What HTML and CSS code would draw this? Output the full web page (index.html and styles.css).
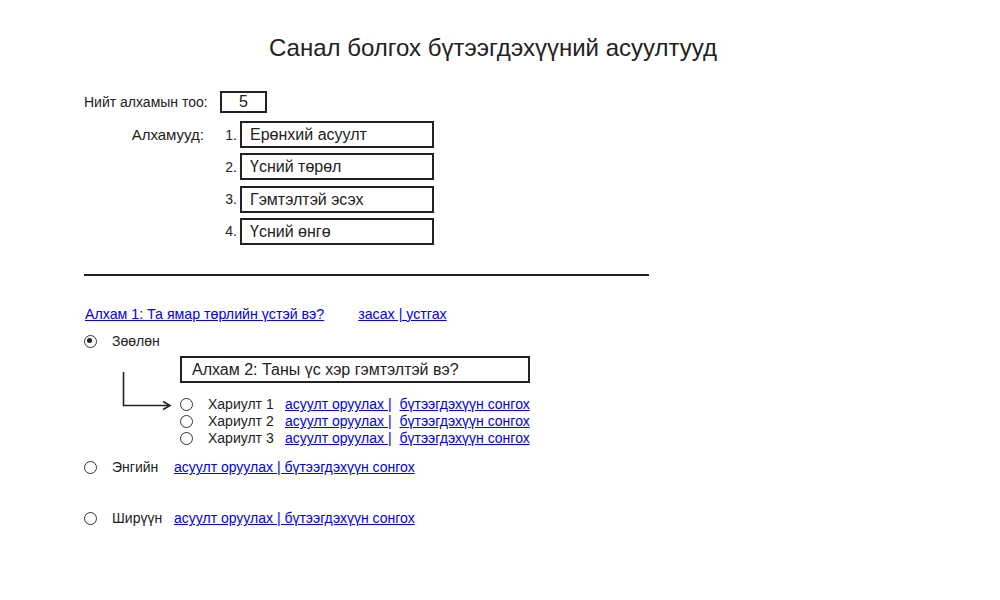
FILE: index.html
```html
<!DOCTYPE html>
<html lang="mn">
<head>
<meta charset="utf-8">
<title>Санал болгох бүтээгдэхүүний асуултууд</title>
<link rel="stylesheet" href="styles.css">
</head>
<body>
<div class="page">
  <h1 class="title">Санал болгох бүтээгдэхүүний асуултууд</h1>

  <div class="count-row">
    <span class="count-label">Нийт алхамын тоо:</span>
    <span class="count-box">5</span>
  </div>

  <div class="steps-row">
    <span class="steps-label">Алхамууд:</span>
    <ol class="steps">
      <li class="step"><span class="num">1.</span><span class="step-box">Ерөнхий асуулт</span></li>
      <li class="step"><span class="num">2.</span><span class="step-box">Үсний төрөл</span></li>
      <li class="step"><span class="num">3.</span><span class="step-box">Гэмтэлтэй эсэх</span></li>
      <li class="step"><span class="num">4.</span><span class="step-box">Үсний өнгө</span></li>
    </ol>
  </div>

  <hr class="divider">

  <div class="q-head">
    <a href="#" class="link">Алхам 1: Та ямар төрлийн үстэй вэ?</a>
    <a href="#" class="link edit">засах | устгах</a>
  </div>

  <div class="opt">
    <span class="radio checked"></span>
    <span class="opt-label">Зөөлөн</span>
  </div>

  <div class="nested">
    <svg class="arrow" width="58" height="56" viewBox="0 0 58 56">
      <path d="M3.5 16 V49.5 H48" fill="none" stroke="#222" stroke-width="1.6"/>
      <path d="M43 45.5 L50 49.5 L43 53.5" fill="none" stroke="#222" stroke-width="1.6"/>
    </svg>
    <div class="sub">
      <div class="sub-box">Алхам 2: Таны үс хэр гэмтэлтэй вэ?</div>
      <div class="answers">
        <div class="answer"><span class="radio"></span><span class="ans-label">Хариулт 1</span><a href="#" class="link">асуулт оруулах |</a><a href="#" class="link">бүтээгдэхүүн сонгох</a></div>
        <div class="answer"><span class="radio"></span><span class="ans-label">Хариулт 2</span><a href="#" class="link">асуулт оруулах |</a><a href="#" class="link">бүтээгдэхүүн сонгох</a></div>
        <div class="answer"><span class="radio"></span><span class="ans-label">Хариулт 3</span><a href="#" class="link">асуулт оруулах |</a><a href="#" class="link">бүтээгдэхүүн сонгох</a></div>
      </div>
    </div>
  </div>

  <div class="opt opt-plain">
    <span class="radio"></span>
    <span class="opt-label short">Энгийн</span>
    <a href="#" class="link">асуулт оруулах | бүтээгдэхүүн сонгох</a>
  </div>

  <div class="opt opt-hard">
    <span class="radio"></span>
    <span class="opt-label short">Ширүүн</span>
    <a href="#" class="link">асуулт оруулах | бүтээгдэхүүн сонгох</a>
  </div>
</div>
</body>
</html>
```

FILE: styles.css
```css
* { box-sizing: border-box; }

body {
  margin: 0;
  background: #fff;
  color: #222;
  font-family: "Liberation Sans", Arial, sans-serif;
  font-size: 14px;
}

.page {
  width: 1000px;
  height: 600px;
  padding: 34px 0 0 84px;
}

.title {
  margin: 0 0 0 -84px;
  padding-right: 14px;
  text-align: center;
  font-weight: normal;
  font-size: 24px;
  line-height: 28px;
  color: #222;
}

.count-row {
  display: flex;
  align-items: center;
  margin-top: 29px;
  height: 22px;
}

.count-label {
  width: 136px;
}

.count-box {
  width: 47px;
  height: 22px;
  border: 2px solid #222;
  text-align: center;
  font-size: 16px;
  line-height: 18px;
}

.steps-row {
  display: flex;
  margin-top: 8px;
}

.steps-label {
  width: 120px;
  text-align: right;
  line-height: 27px;
  font-size: 15px;
}

.steps {
  list-style: none;
  margin: 0;
  padding: 0;
  display: flex;
  flex-direction: column;
  gap: 5.3px;
}

.step {
  display: flex;
  align-items: center;
}

.num {
  width: 33px;
  text-align: right;
  margin-right: 3px;
}

.step-box {
  width: 194px;
  height: 27px;
  border: 2px solid #222;
  padding-left: 8px;
  font-size: 16px;
  line-height: 23px;
}

.divider {
  width: 565px;
  margin: 29px 0 0 0;
  border: 0;
  border-top: 2px solid #222;
}

.link {
  color: #0000ee;
  text-decoration: underline;
}

.q-head {
  display: flex;
  gap: 34px;
  margin-top: 30px;
  line-height: 17px;
  padding-left: 1px;
  font-size: 14.2px;
}

.opt {
  display: flex;
  align-items: center;
  height: 17px;
  margin-top: 10px;
}

.radio {
  display: inline-block;
  flex: none;
  width: 13px;
  height: 13px;
  border: 1.6px solid #333;
  border-radius: 50%;
  position: relative;
}

.radio.checked::after {
  content: "";
  position: absolute;
  left: 2.4px;
  top: 2.4px;
  width: 5px;
  height: 5px;
  border-radius: 50%;
  background: #222;
}

.opt-label {
  margin-left: 15px;
}

.opt-label.short {
  width: 62px;
}

.nested {
  display: flex;
  margin-top: 6px;
  margin-left: 36px;
}

.arrow {
  display: block;
  flex: none;
  margin-right: 2px;
}

.sub-box {
  width: 350px;
  height: 27px;
  border: 2px solid #222;
  padding-left: 10px;
  font-size: 16px;
  line-height: 23px;
}

.answers {
  margin-top: 13px;
}

.answer {
  display: flex;
  align-items: center;
  height: 17px;
}

.ans-label {
  width: 77px;
  margin-left: 15px;
}

.answer .link + .link {
  margin-left: 8px;
}

.opt-plain {
  margin-top: 12px;
}

.opt-hard {
  margin-top: 34px;
}
```
